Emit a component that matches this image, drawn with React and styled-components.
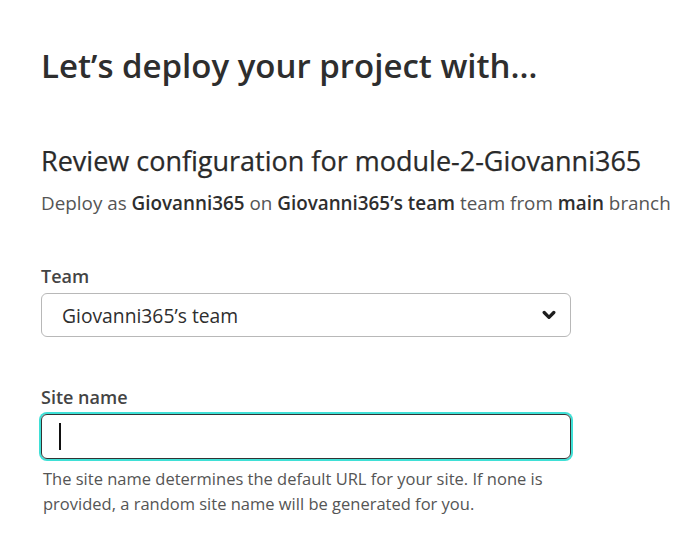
import React from 'react'
import styled, { createGlobalStyle } from 'styled-components'

const Global = createGlobalStyle`
  body {
    margin: 0;
    background: #fff;
    font-family: "Open Sans", "Noto Sans", sans-serif;
    color: #333;
  }
`

const Page = styled.div`
  padding: 40px 0 0 41px;
  width: 654px;
`

const Title = styled.h1`
  margin: 0;
  font-size: 33px;
  font-weight: 600;
  color: #2e2e2e;
  line-height: 52px;
`

const Section = styled.section`
  margin-top: 51px;
`

const Subtitle = styled.h2`
  margin: 0;
  font-size: 27px;
  font-weight: 500;
  color: #2a2a2a;
  line-height: 36px;
  -webkit-text-stroke: 0.25px #2a2a2a;
`

const Meta = styled.p`
  margin: 10px 0 0;
  font-size: 18.85px;
  color: #555;
  line-height: 28px;
  white-space: nowrap;

  b {
    font-weight: 600;
    color: #2e2e2e;
  }
`

const Field = styled.div`
  margin-top: ${(p) => p.gap}px;
  width: 530px;
`

const Label = styled.label`
  display: block;
  font-size: 18px;
  font-weight: 600;
  color: #444;
  line-height: 24px;
  margin-bottom: 5px;
`

const SelectBox = styled.div`
  box-sizing: border-box;
  height: 44px;
  border: 1px solid #b8b8b8;
  border-radius: 6px;
  display: flex;
  align-items: center;
  justify-content: space-between;
  padding: 0 14px 0 20px;
  font-size: 19.3px;
  font-weight: 500;
  color: #2e2e2e;
`

const Chevron = () => (
  <svg width="14" height="10" viewBox="0 0 14 10">
    <path d="M2.2 2.5 L7 7.3 L11.8 2.5" fill="none" stroke="#1e1e1e" strokeWidth="3.3" strokeLinecap="round" strokeLinejoin="round" />
  </svg>
)

const InputBox = styled.div`
  box-sizing: border-box;
  height: 45px;
  margin: 1px 0 2px;
  border: 1px solid #333;
  border-radius: 6px;
  box-shadow: 0 0 0 2px #3fe0d6;
  display: flex;
  align-items: center;
  padding-left: 17px;
`

const Caret = styled.span`
  width: 2px;
  height: 27px;
  background: #111;
`

const Help = styled.p`
  margin: 7px 0 0 2px;
  font-size: 16.5px;
  color: #555;
  line-height: 25px;
  width: 520px;
`

export default function App() {
  return (
    <Page>
      <Global />
      <Title>Let’s deploy your project with…</Title>
      <Section>
        <Subtitle>Review configuration for module-2-Giovanni365</Subtitle>
        <Meta>
          Deploy as <b>Giovanni365</b> on <b>Giovanni365’s team</b> team from <b>main</b> branch
        </Meta>
      </Section>
      <Field gap={47}>
        <Label>Team</Label>
        <SelectBox>
          <span>Giovanni365’s team</span>
          <Chevron />
        </SelectBox>
      </Field>
      <Field gap={48}>
        <Label>Site name</Label>
        <InputBox>
          <Caret />
        </InputBox>
        <Help>
          The site name determines the default URL for your site. If none is provided, a random site name will be generated for you.
        </Help>
      </Field>
    </Page>
  )
}
